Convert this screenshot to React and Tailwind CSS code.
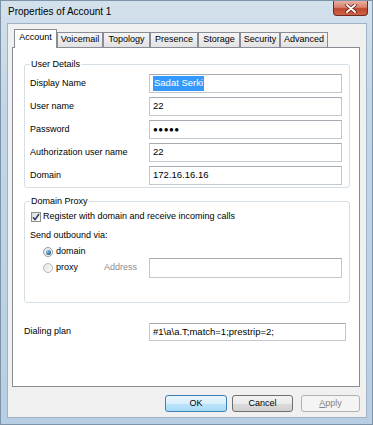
const font = "[font-family:'Liberation_Sans',Arial,sans-serif]"

function TextBox({ w, h = 'h-[19px]', children }) {
  return (
    <div
      className={`${w} ${h} flex items-center border border-[#c3c8cf] border-t-[#a7acb4] bg-white pl-[3px] text-[9.5px] text-black`}
    >
      {children}
    </div>
  )
}

function Row({ label, children }) {
  return (
    <div className="flex h-[19px] items-center">
      <span className="w-[119px] text-[9px] text-black">{label}</span>
      {children}
    </div>
  )
}

const tabs = [
  ['Account', 'w-[43px]'],
  ['Voicemail', 'w-[46px]'],
  ['Topology', 'w-[47px]'],
  ['Presence', 'w-[48px]'],
  ['Storage', 'w-[42px]'],
  ['Security', 'w-[40px]'],
  ['Advanced', 'w-[48px]'],
]

export default function App() {
  return (
    <div
      className={`${font} flex h-[425px] w-[373px] flex-col border border-[#7d93a8] bg-[linear-gradient(180deg,#d3e1ec_0%,#c2d6e6_25%,#b8cfe3_100%)]`}
    >
      {/* title bar */}
      <div className="flex h-[22px] items-start">
        <span className="pl-[7px] pt-[5px] text-[10px] leading-[12px] text-black">Properties of Account 1</span>
        <div className="ml-auto mr-[4px] flex h-[15px] w-[35px] items-center justify-center rounded-b-[4px] border border-t-0 border-[#6e2b22] bg-[linear-gradient(180deg,#eab1a4_0%,#d8806c_45%,#bd4630_55%,#cf6446_100%)]">
          <svg width="12" height="9" viewBox="0 0 12 9">
            <path d="M2 1 L10 8 M10 1 L2 8" stroke="#5a1d14" strokeWidth="3.4" strokeLinecap="round" />
            <path d="M2 1 L10 8 M10 1 L2 8" stroke="#fff" strokeWidth="1.9" strokeLinecap="round" />
          </svg>
        </div>
      </div>

      {/* client area */}
      <div className="ml-[6px] mr-[5px] flex h-[395px] flex-col border border-[#9fb3c6] bg-[#f0f0f0] pl-[4px] pr-[6px] pt-[5px]">
        <div className="relative z-10 flex items-end pl-[2px]">
          {tabs.map(([name, w], i) =>
            i === 0 ? (
              <div
                key={name}
                className={`${w} -mb-px flex h-[19px] items-center justify-center border border-b-0 border-[#898c95] bg-white pb-[2px] text-[9px] text-black`}
              >
                {name}
              </div>
            ) : (
              <div
                key={name}
                className={`${w} flex h-[15px] items-center justify-center border border-b-0 border-[#898c95] bg-linear-to-b from-[#f5f5f5] to-[#e2e2e2] text-[9px] text-black`}
              >
                {name}
              </div>
            )
          )}
        </div>

        <div className="flex h-[340px] flex-col border border-[#898c95] bg-white pl-[11px] pr-[9px] pt-[10px]">
          <fieldset className="rounded-[3px] border border-[#d5dfe5] pb-[2px] pl-[5px] pr-[6px] pt-[4px]">
            <legend className="px-[1px] text-[9px] leading-[12px] text-black">User Details</legend>
            <div className="flex flex-col gap-[4px]">
              <Row label="Display Name">
                <TextBox w="w-[193px]">
                  <span className="bg-[#3399ff] px-px text-white">Sadat Serki</span>
                </TextBox>
              </Row>
              <Row label="User name">
                <TextBox w="w-[193px]">22</TextBox>
              </Row>
              <Row label="Password">
                <TextBox w="w-[193px]">
                  <span className="text-[8px] tracking-[0.5px]">●●●●●</span>
                </TextBox>
              </Row>
              <Row label="Authorization user name">
                <TextBox w="w-[193px]">22</TextBox>
              </Row>
              <Row label="Domain">
                <TextBox w="w-[193px]">172.16.16.16</TextBox>
              </Row>
            </div>
          </fieldset>

          <fieldset className="mt-[7px] rounded-[3px] border border-[#d5dfe5] pb-[24px] pl-[5px] pr-[6px] pt-[3px]">
            <legend className="px-[1px] text-[9px] leading-[12px] text-black">Domain Proxy</legend>
            <div className="flex h-[14px] items-center gap-[2px] pl-[1px] text-[9px] text-black">
              <span className="flex h-[10px] w-[10px] items-center justify-center border border-[#8e8f8f] bg-linear-to-br from-[#dcdcdc] to-white">
                <svg width="8" height="8" viewBox="0 0 8 8">
                  <path d="M1 4.2 L3.1 6.6 L7 1" stroke="#283a63" strokeWidth="1.5" fill="none" />
                </svg>
              </span>
              <span>Register with domain and receive incoming calls</span>
            </div>
            <div className="mt-[5px] flex h-[14px] items-center text-[9px] text-black">Send outbound via:</div>
            <div className="mt-[3px] flex h-[12px] items-center gap-[3px] pl-[13px] text-[9px] text-black">
              <span className="flex h-[10px] w-[10px] items-center justify-center rounded-full border border-[#8e9aa3] bg-linear-to-br from-[#e4e4e4] to-white">
                <span className="h-[5px] w-[5px] rounded-full bg-[radial-gradient(circle_at_35%_35%,#9cd0f0_0%,#2a6d9c_60%,#1d4d72_100%)]" />
              </span>
              <span>domain</span>
            </div>
            <div className="flex h-[20px] items-center text-[9px] text-black">
              <div className="flex w-[74px] items-center gap-[3px] pl-[13px]">
                <span className="h-[10px] w-[10px] rounded-full border border-[#b5b9bd] bg-linear-to-br from-[#e2e2e2] to-[#fbfbfb]" />
                <span>proxy</span>
              </div>
              <span className="w-[45px] text-[#8b8b8b]">Address</span>
              <TextBox w="w-[193px]" h="h-[20px]" />
            </div>
          </fieldset>

          <div className="mt-[20px] flex h-[18px] items-center">
            <span className="w-[125px] text-[9px] text-black">Dialing plan</span>
            <TextBox w="w-[197px]" h="h-[18px]">
              {'#1\\a\\a.T;match=1;prestrip=2;'}
            </TextBox>
          </div>
        </div>

        <div className="mt-[8px] flex justify-end text-[9px]">
          <div className="flex h-[17px] w-[62px] items-center justify-center rounded-[3px] border border-[#3c7fb1] bg-[linear-gradient(180deg,#eaf6fd_0%,#d9f0fc_50%,#bee6fd_50%,#a7d9f5_100%)] text-black">
            OK
          </div>
          <div className="ml-[5px] flex h-[17px] w-[61px] items-center justify-center rounded-[3px] border border-[#707070] bg-[linear-gradient(180deg,#f2f2f2_0%,#ebebeb_50%,#dddddd_50%,#cfcfcf_100%)] text-black">
            Cancel
          </div>
          <div className="ml-[8px] flex h-[17px] w-[59px] items-center justify-center rounded-[3px] border border-[#adb2b5] bg-[#f4f4f4] text-[#838383]">
            <span>
              <span className="underline">A</span>pply
            </span>
          </div>
        </div>
      </div>
    </div>
  )
}
